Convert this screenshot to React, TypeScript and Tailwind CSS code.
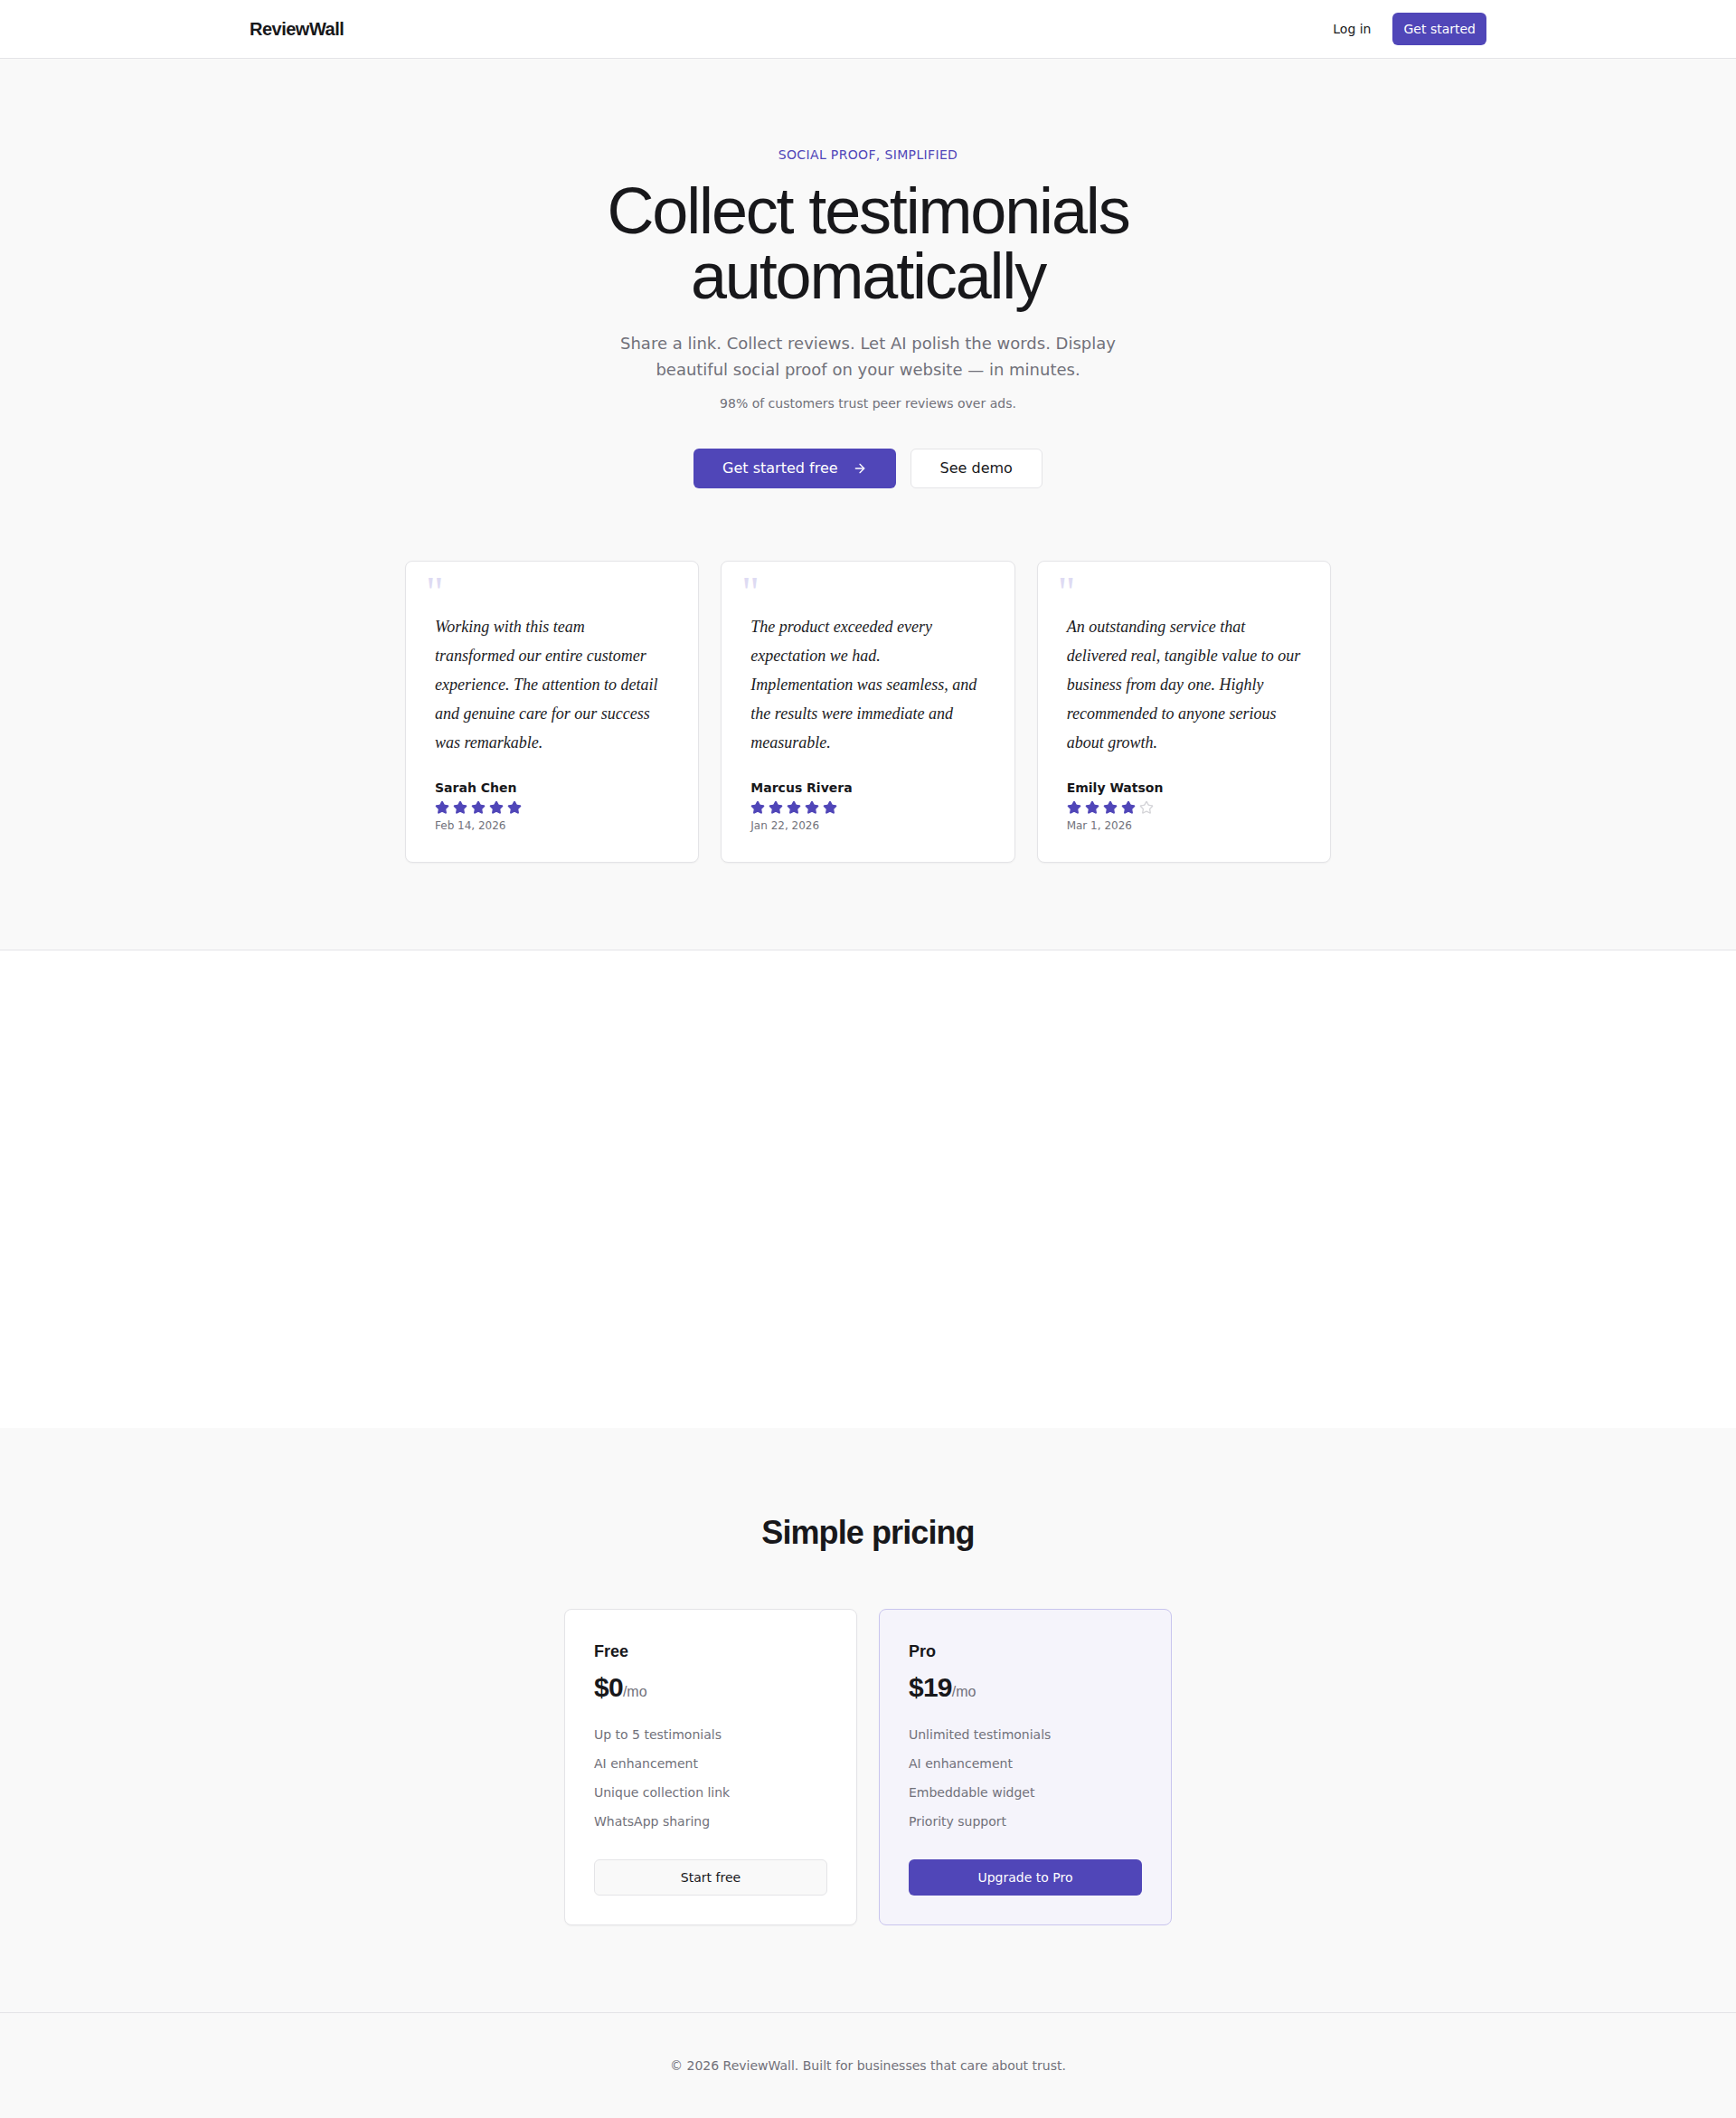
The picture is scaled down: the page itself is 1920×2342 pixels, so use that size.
import React from "react";
import { ArrowRight } from "lucide-react";

const SANS = "font-['DejaVu_Sans',sans-serif]";
const HEAD = "font-['Liberation_Sans',Arial,sans-serif]";
const SERIF = "font-['Liberation_Serif','Times_New_Roman',serif]";

function StarIcon({ filled }: { filled: boolean }) {
  return (
    <svg
      width="16"
      height="16"
      viewBox="0 0 24 24"
      fill={filled ? "#5046b8" : "none"}
      stroke={filled ? "#5046b8" : "#d4d4d8"}
      strokeWidth="2"
      strokeLinecap="round"
      strokeLinejoin="round"
    >
      <path d="M11.525 2.295a.53.53 0 0 1 .95 0l2.31 4.679a2.123 2.123 0 0 0 1.595 1.16l5.166.756a.53.53 0 0 1 .294.904l-3.736 3.638a2.123 2.123 0 0 0-.611 1.878l.882 5.14a.53.53 0 0 1-.771.56l-4.618-2.428a2.122 2.122 0 0 0-1.973 0L6.396 21.01a.53.53 0 0 1-.77-.56l.881-5.139a2.122 2.122 0 0 0-.611-1.879L2.16 9.795a.53.53 0 0 1 .294-.906l5.165-.755a2.122 2.122 0 0 0 1.597-1.16z" />
    </svg>
  );
}

const testimonials = [
  {
    lines: [
      "Working with this team",
      "transformed our entire customer",
      "experience. The attention to detail",
      "and genuine care for our success",
      "was remarkable.",
    ],
    name: "Sarah Chen",
    rating: 5,
    date: "Feb 14, 2026",
  },
  {
    lines: [
      "The product exceeded every",
      "expectation we had.",
      "Implementation was seamless, and",
      "the results were immediate and",
      "measurable.",
    ],
    name: "Marcus Rivera",
    rating: 5,
    date: "Jan 22, 2026",
  },
  {
    lines: [
      "An outstanding service that",
      "delivered real, tangible value to our",
      "business from day one. Highly",
      "recommended to anyone serious",
      "about growth.",
    ],
    name: "Emily Watson",
    rating: 4,
    date: "Mar 1, 2026",
  },
];

function TestimonialCard({ t }: { t: (typeof testimonials)[number] }) {
  return (
    <div className="relative rounded-lg border border-[#e4e4e7] bg-white p-8 shadow-[0_1px_2px_rgba(0,0,0,0.04)]">
      <span
        className={`${SERIF} absolute left-[22px] top-[10px] select-none text-5xl leading-none text-[#dedbf3]`}
      >
        "
      </span>
      <p
        className={`${SERIF} mt-6 whitespace-nowrap text-[18px] italic leading-8 text-[#1c1c1f]`}
      >
        {t.lines.map((l, i) => (
          <React.Fragment key={i}>
            {l}
            {i < t.lines.length - 1 && <br />}
          </React.Fragment>
        ))}
      </p>
      <div className="mt-6">
        <div className={`${SANS} text-sm font-semibold text-[#18181b]`}>{t.name}</div>
        <div className="mt-1 flex gap-1">
          {[0, 1, 2, 3, 4].map((i) => (
            <StarIcon key={i} filled={i < t.rating} />
          ))}
        </div>
        <div className={`${SANS} mt-1 text-xs text-[#71717a]`}>{t.date}</div>
      </div>
    </div>
  );
}

function PriceCard({
  name,
  price,
  features,
  cta,
  pro,
}: {
  name: string;
  price: string;
  features: string[];
  cta: string;
  pro?: boolean;
}) {
  return (
    <div
      className={`rounded-lg border p-8 ${
        pro
          ? "border-[#c9c5ee] bg-[#f5f4fb]"
          : "border-[#e4e4e7] bg-white shadow-[0_1px_2px_rgba(0,0,0,0.04)]"
      }`}
    >
      <div className={`${HEAD} text-lg font-bold text-[#18181b]`}>{name}</div>
      <div className={`${HEAD} mt-2 text-3xl font-bold tracking-tight text-[#18181b]`}>
        {price}
        <span className="text-base font-normal tracking-normal text-[#71717a]">/mo</span>
      </div>
      <ul className={`${SANS} mt-6 space-y-3 text-sm text-[#71717a]`}>
        {features.map((f) => (
          <li key={f}>{f}</li>
        ))}
      </ul>
      <button
        className={`${SANS} mt-8 flex h-10 w-full items-center justify-center rounded-md text-sm ${
          pro
            ? "bg-[#5046b8] text-white"
            : "border border-[#e4e4e7] bg-[#f9f9f9] text-[#18181b]"
        }`}
      >
        {cta}
      </button>
    </div>
  );
}

export default function App() {
  return (
    <div className={`${SANS} min-h-screen bg-[#f9f9f9] text-[#18181b]`}>
      {/* Nav */}
      <header className="border-b border-[#e4e4e7] bg-white">
        <div className="mx-auto flex h-16 w-full max-w-[1400px] items-center justify-between px-4">
          <div className={`${HEAD} text-xl font-bold tracking-tight text-[#18181b]`}>ReviewWall</div>
          <div className="flex items-center gap-3">
            <button className="h-9 rounded-md px-3 text-sm text-[#18181b]">Log in</button>
            <button className="h-9 rounded-md bg-[#5046b8] px-3 text-sm text-white">Get started</button>
          </div>
        </div>
      </header>

      {/* Hero */}
      <section className="bg-[#f9f9f9] px-4 pb-24 pt-24">
        <div className="mx-auto flex max-w-5xl flex-col items-center text-center">
          <p className="text-sm uppercase tracking-wide text-[#5046b8]">Social proof, simplified</p>
          <h1
            className={`${HEAD} mt-4 text-7xl font-medium leading-none tracking-[-0.03em] text-[#18181b]`}
          >
            Collect testimonials
            <br />
            automatically
          </h1>
          <p className="mt-6 max-w-xl text-lg leading-relaxed text-[#71717a]">
            Share a link. Collect reviews. Let AI polish the words. Display beautiful social proof on
            your website — in minutes.
          </p>
          <p className="mt-3 text-sm text-[#71717a]">98% of customers trust peer reviews over ads.</p>
          <div className="mt-10 flex items-center gap-4">
            <button className="flex h-11 items-center gap-4 rounded-md bg-[#5046b8] px-8 text-base text-white">
              Get started free
              <ArrowRight size={16} strokeWidth={2} />
            </button>
            <button className="flex h-11 items-center rounded-md border border-[#e4e4e7] bg-white px-8 text-base text-[#18181b]">
              See demo
            </button>
          </div>
        </div>
        <div className="mx-auto mt-20 grid max-w-5xl grid-cols-3 gap-6">
          {testimonials.map((t) => (
            <TestimonialCard key={t.name} t={t} />
          ))}
        </div>
      </section>

      {/* Empty middle section */}
      <section className="h-[529px] border-t border-[#e4e4e7] bg-white" />

      {/* Pricing */}
      <section className="bg-[#f9f9f9] px-4 pb-24 pt-24">
        <h2 className={`${HEAD} text-center text-4xl font-bold tracking-tight text-[#18181b]`}>
          Simple pricing
        </h2>
        <div className="mx-auto mt-16 grid max-w-2xl grid-cols-2 gap-6">
          <PriceCard
            name="Free"
            price="$0"
            features={["Up to 5 testimonials", "AI enhancement", "Unique collection link", "WhatsApp sharing"]}
            cta="Start free"
          />
          <PriceCard
            name="Pro"
            price="$19"
            features={["Unlimited testimonials", "AI enhancement", "Embeddable widget", "Priority support"]}
            cta="Upgrade to Pro"
            pro
          />
        </div>
      </section>

      {/* Footer */}
      <footer className="border-t border-[#e4e4e7] bg-[#f9f9f9] py-12 text-center text-sm text-[#71717a]">
        © 2026 ReviewWall. Built for businesses that care about trust.
      </footer>
    </div>
  );
}
